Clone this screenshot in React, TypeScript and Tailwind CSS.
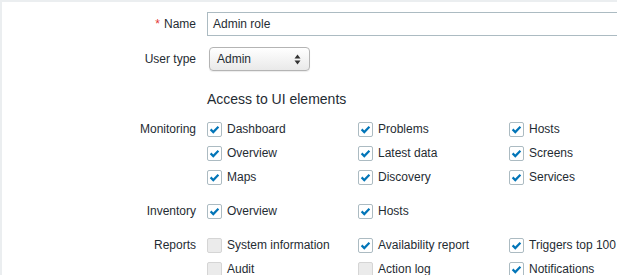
import React from "react";

type Perm = { label: string; checked: boolean };

const groups: { title: string; rows: Perm[][] }[] = [
  {
    title: "Monitoring",
    rows: [
      [
        { label: "Dashboard", checked: true },
        { label: "Problems", checked: true },
        { label: "Hosts", checked: true },
      ],
      [
        { label: "Overview", checked: true },
        { label: "Latest data", checked: true },
        { label: "Screens", checked: true },
      ],
      [
        { label: "Maps", checked: true },
        { label: "Discovery", checked: true },
        { label: "Services", checked: true },
      ],
    ],
  },
  {
    title: "Inventory",
    rows: [
      [
        { label: "Overview", checked: true },
        { label: "Hosts", checked: true },
      ],
    ],
  },
  {
    title: "Reports",
    rows: [
      [
        { label: "System information", checked: false },
        { label: "Availability report", checked: true },
        { label: "Triggers top 100", checked: true },
      ],
      [
        { label: "Audit", checked: false },
        { label: "Action log", checked: false },
        { label: "Notifications", checked: true },
      ],
    ],
  },
];

function Checkbox({ checked }: { checked: boolean }) {
  if (!checked) {
    return <div className="w-[15px] h-[15px] shrink-0 rounded-[2px] border border-[#d5d5d5] bg-[#ebebeb]" />;
  }
  return (
    <div className="w-[15px] h-[15px] shrink-0 rounded-[2px] border border-[#acbbc2] bg-white flex items-center justify-center">
      <svg width="11" height="11" viewBox="0 0 11 11">
        <polyline points="1.6,5.4 4.3,8.1 9.4,2.8" fill="none" stroke="#0275b8" strokeWidth="2.2" />
      </svg>
    </div>
  );
}

function Label({ children }: { children: React.ReactNode }) {
  return <div className="w-[205px] shrink-0 pr-[11px] text-right">{children}</div>;
}

export default function App() {
  return (
    <div
      className="w-full h-[275px] overflow-hidden bg-[#ebeef0] pt-[2px] pl-[2px] text-[12px] text-[#1f2c33]"
      style={{ fontFamily: '"Liberation Sans", Arial, sans-serif' }}
    >
      <div className="bg-white h-full pt-[10px] flex flex-col">
        {/* name */}
        <div className="flex items-center h-[24px]">
          <Label>
            <span className="text-[#e33734] mr-[4px]">*</span>Name
          </Label>
          <div className="w-[453px] h-[24px] shrink-0 border border-[#acbbc2] bg-white pl-[5px] flex items-center">
            Admin role
          </div>
        </div>

        {/* user type */}
        <div className="flex items-center h-[24px] mt-[11px]">
          <Label>User type</Label>
          <div className="ml-[2px] w-[101px] h-[24px] rounded-[4px] border border-[#b4b4b4] bg-gradient-to-b from-white to-[#e9e9e9] shadow-[0_1px_1px_rgba(0,0,0,0.08)] flex items-center justify-between pl-[7px] pr-[8px]">
            <span>Admin</span>
            <svg width="7" height="11" viewBox="0 0 7 11">
              <polygon points="3.5,0.5 6.5,4.5 0.5,4.5" fill="#333" />
              <polygon points="3.5,10.5 6.5,6.5 0.5,6.5" fill="#333" />
            </svg>
          </div>
        </div>

        {/* header */}
        <div className="flex items-center h-[16px] mt-[20px]">
          <Label>{""}</Label>
          <div className="text-[14px] leading-[16px]">Access to UI elements</div>
        </div>

        {groups.map((g, gi) => (
          <div key={g.title} className={`flex ${gi === 0 ? "mt-[10px]" : "mt-[10px]"}`}>
            <div className="w-[205px] shrink-0 pr-[11px] text-right h-[24px] flex items-center justify-end">{g.title}</div>
            <div className="flex flex-col">
              {g.rows.map((row, ri) => (
                <div key={ri} className="grid grid-cols-[151px_151px_151px] h-[24px]">
                  {row.map((p, pi) => (
                    <div key={pi} className="flex items-center gap-[5px] whitespace-nowrap">
                      <Checkbox checked={p.checked} />
                      <span>{p.label}</span>
                    </div>
                  ))}
                </div>
              ))}
            </div>
          </div>
        ))}
      </div>
    </div>
  );
}
